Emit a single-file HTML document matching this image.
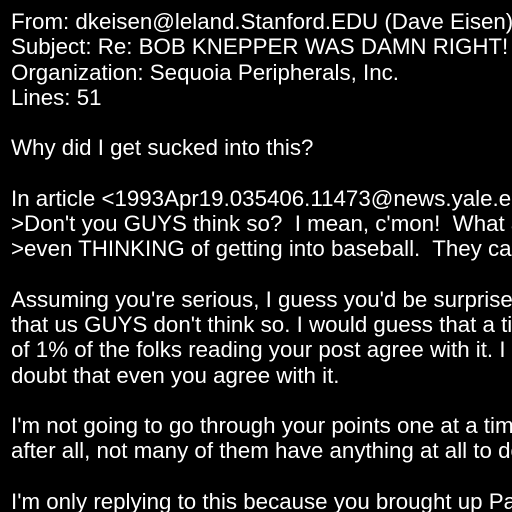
<!DOCTYPE html>
<html><head><style>
html,body{margin:0;padding:0;background:#000;width:512px;height:512px;overflow:hidden}
pre{margin:0;padding:9px 0 0 11px;color:#fff;font-family:"Liberation Sans",sans-serif;font-size:22.3px;line-height:25.25px;white-space:pre;width:501px;overflow:hidden}
</style></head><body><pre>From: dkeisen@leland.Stanford.EDU (Dave Eisen)
Subject: Re: BOB KNEPPER WAS DAMN RIGHT!
Organization: Sequoia Peripherals, Inc.
Lines: 51

Why did I get sucked into this?

In article &lt;1993Apr19.035406.11473@news.yale.edu&gt;
&gt;Don't you GUYS think so?  I mean, c'mon!  What are
&gt;even THINKING of getting into baseball.  They can't

Assuming you're serious, I guess you'd be surprised
that us GUYS don't think so. I would guess that a tiny
of 1% of the folks reading your post agree with it. I
doubt that even you agree with it.

I'm not going to go through your points one at a time,
after all, not many of them have anything at all to do

I'm only replying to this because you brought up Pam</pre></body></html>
